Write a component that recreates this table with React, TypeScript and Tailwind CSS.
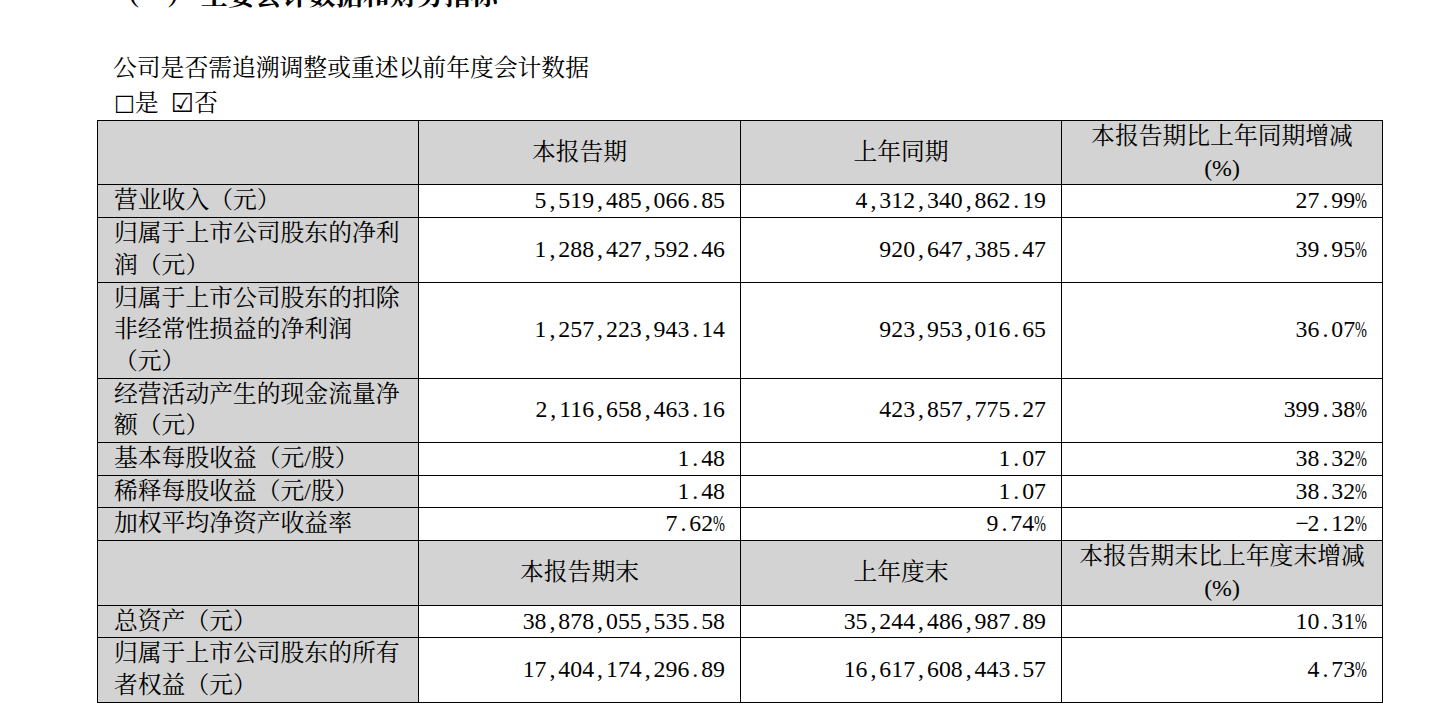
import type { ReactNode } from 'react'

type Row = {
    label: string
    current: string
    previous: string
    change: string
}

const ROWS_PERIOD: Row[] = [
    { label: '营业收入（元）', current: '5,519,485,066.85', previous: '4,312,340,862.19', change: '27.99%' },
    {
        label: '归属于上市公司股东的净利润（元）',
        current: '1,288,427,592.46',
        previous: '920,647,385.47',
        change: '39.95%',
    },
    {
        label: '归属于上市公司股东的扣除非经常性损益的净利润（元）',
        current: '1,257,223,943.14',
        previous: '923,953,016.65',
        change: '36.07%',
    },
    {
        label: '经营活动产生的现金流量净额（元）',
        current: '2,116,658,463.16',
        previous: '423,857,775.27',
        change: '399.38%',
    },
    { label: '基本每股收益（元/股）', current: '1.48', previous: '1.07', change: '38.32%' },
    { label: '稀释每股收益（元/股）', current: '1.48', previous: '1.07', change: '38.32%' },
    { label: '加权平均净资产收益率', current: '7.62%', previous: '9.74%', change: '-2.12%' },
]

const ROWS_END: Row[] = [
    { label: '总资产（元）', current: '38,878,055,535.58', previous: '35,244,486,987.89', change: '10.31%' },
    {
        label: '归属于上市公司股东的所有者权益（元）',
        current: '17,404,174,296.89',
        previous: '16,617,608,443.57',
        change: '4.73%',
    },
]

// half-width cells like the song typeface the report was printed in
const Num = ({ v }: { v: string }) => (
    <span className="whitespace-nowrap">
        {v.split('').map((c, i) => {
            if (/\d/.test(c)) {
                return <span key={i}>{c}</span>
            }
            if (c === '%') {
                return (
                    <span key={i} className="inline-block w-[0.5em]">
                        <span className="inline-block origin-left scale-x-[0.6]">%</span>
                    </span>
                )
            }
            return (
                <span key={i} className="inline-block w-[0.5em] text-center">
                    {c === '-' ? '−' : c}
                </span>
            )
        })}
    </span>
)

const cell = 'border border-black leading-[31.7px] p-0'
const labelCell = `${cell} bg-[#d3d3d3] pl-[16px] pr-[8px] text-left align-middle`
const numCell = `${cell} pr-[15px] text-right align-middle`
const headCell = `${cell} bg-[#d3d3d3] text-center align-middle`

const HeaderRow = ({ a, b, c }: { a: string; b: string; c: ReactNode }) => (
    <tr>
        <td className={`${headCell} h-[64px]`}></td>
        <td className={headCell}>{a}</td>
        <td className={headCell}>{b}</td>
        <td className={headCell}>{c}</td>
    </tr>
)

const DataRow = ({ row }: { row: Row }) => (
    <tr>
        <td className={labelCell}>{row.label}</td>
        <td className={numCell}>
            <Num v={row.current} />
        </td>
        <td className={numCell}>
            <Num v={row.previous} />
        </td>
        <td className={numCell}>
            <Num v={row.change} />
        </td>
    </tr>
)

const App = () => {
    return (
        <div className="min-h-screen overflow-hidden bg-white font-['Liberation_Serif','Noto_Serif_CJK_SC','Noto_Sans_CJK_SC',serif] text-[23.8px] text-black">
            <div className="-mt-[17px] pl-[113px] text-[27px] leading-[27px] font-bold whitespace-nowrap">
                （一） 主要会计数据和财务指标
            </div>

            <p className="mt-[40px] pl-[113px] leading-[36px]">公司是否需追溯调整或重述以前年度会计数据</p>
            <p className="flex items-center pl-[114px] leading-[34px]">
                <span className="font-['DejaVu_Sans',sans-serif] text-[22px] leading-[34px]">□</span>
                <span>是</span>
                <span className="ml-[12px] font-['DejaVu_Sans',sans-serif] text-[26px] leading-[34px]">☑</span>
                <span>否</span>
            </p>

            <table className="ml-[97px] w-[1285px] table-fixed border-collapse">
                <colgroup>
                    <col className="w-[321px]" />
                    <col className="w-[322px]" />
                    <col className="w-[321px]" />
                    <col className="w-[321px]" />
                </colgroup>
                <tbody>
                    <HeaderRow
                        a="本报告期"
                        b="上年同期"
                        c={
                            <>
                                <div>本报告期比上年同期增减</div>
                                <div>(%)</div>
                            </>
                        }
                    />
                    {ROWS_PERIOD.map((row) => (
                        <DataRow key={row.label} row={row} />
                    ))}
                    <HeaderRow
                        a="本报告期末"
                        b="上年度末"
                        c={
                            <>
                                <div>本报告期末比上年度末增减</div>
                                <div>(%)</div>
                            </>
                        }
                    />
                    {ROWS_END.map((row) => (
                        <DataRow key={row.label} row={row} />
                    ))}
                </tbody>
            </table>
        </div>
    )
}

export default App
